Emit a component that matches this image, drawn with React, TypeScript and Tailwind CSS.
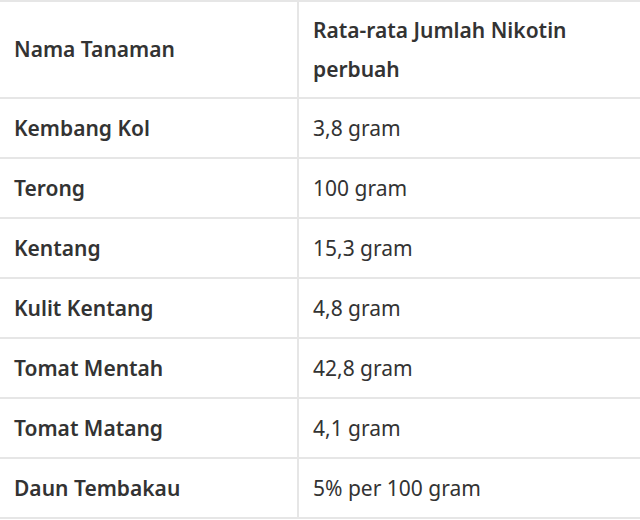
const rows: [string, string][] = [
  ["Kembang Kol", "3,8 gram"],
  ["Terong", "100 gram"],
  ["Kentang", "15,3 gram"],
  ["Kulit Kentang", "4,8 gram"],
  ["Tomat Mentah", "42,8 gram"],
  ["Tomat Matang", "4,1 gram"],
  ["Daun Tembakau", "5% per 100 gram"],
];

export default function App() {
  return (
    <div
      className="w-[640px] h-[520px] overflow-hidden bg-white text-[#333333]"
      style={{ fontFamily: "'Noto Sans', 'Open Sans', sans-serif" }}
    >
      <div className="grid grid-cols-[299px_1fr] border-t-2 border-[#e6e6e6] text-[21px] leading-[39px]">
        {/* header */}
        <div className="h-[97px] flex items-center px-[14px] font-semibold border-b-2 border-r-2 border-[#e6e6e6]">
          Nama Tanaman
        </div>
        <div className="h-[97px] flex items-center pl-[14px] pr-[30px] font-semibold border-b-2 border-[#e6e6e6]">
          Rata-rata Jumlah Nikotin perbuah
        </div>

        {rows.map(([name, value]) => (
          <>
            <div
              key={name}
              className="h-[60px] flex items-center px-[14px] font-semibold border-b-2 border-r-2 border-[#e6e6e6]"
            >
              {name}
            </div>
            <div
              key={name + "-v"}
              className="h-[60px] flex items-center px-[14px] border-b-2 border-[#e6e6e6]"
            >
              {value}
            </div>
          </>
        ))}
      </div>
    </div>
  );
}
